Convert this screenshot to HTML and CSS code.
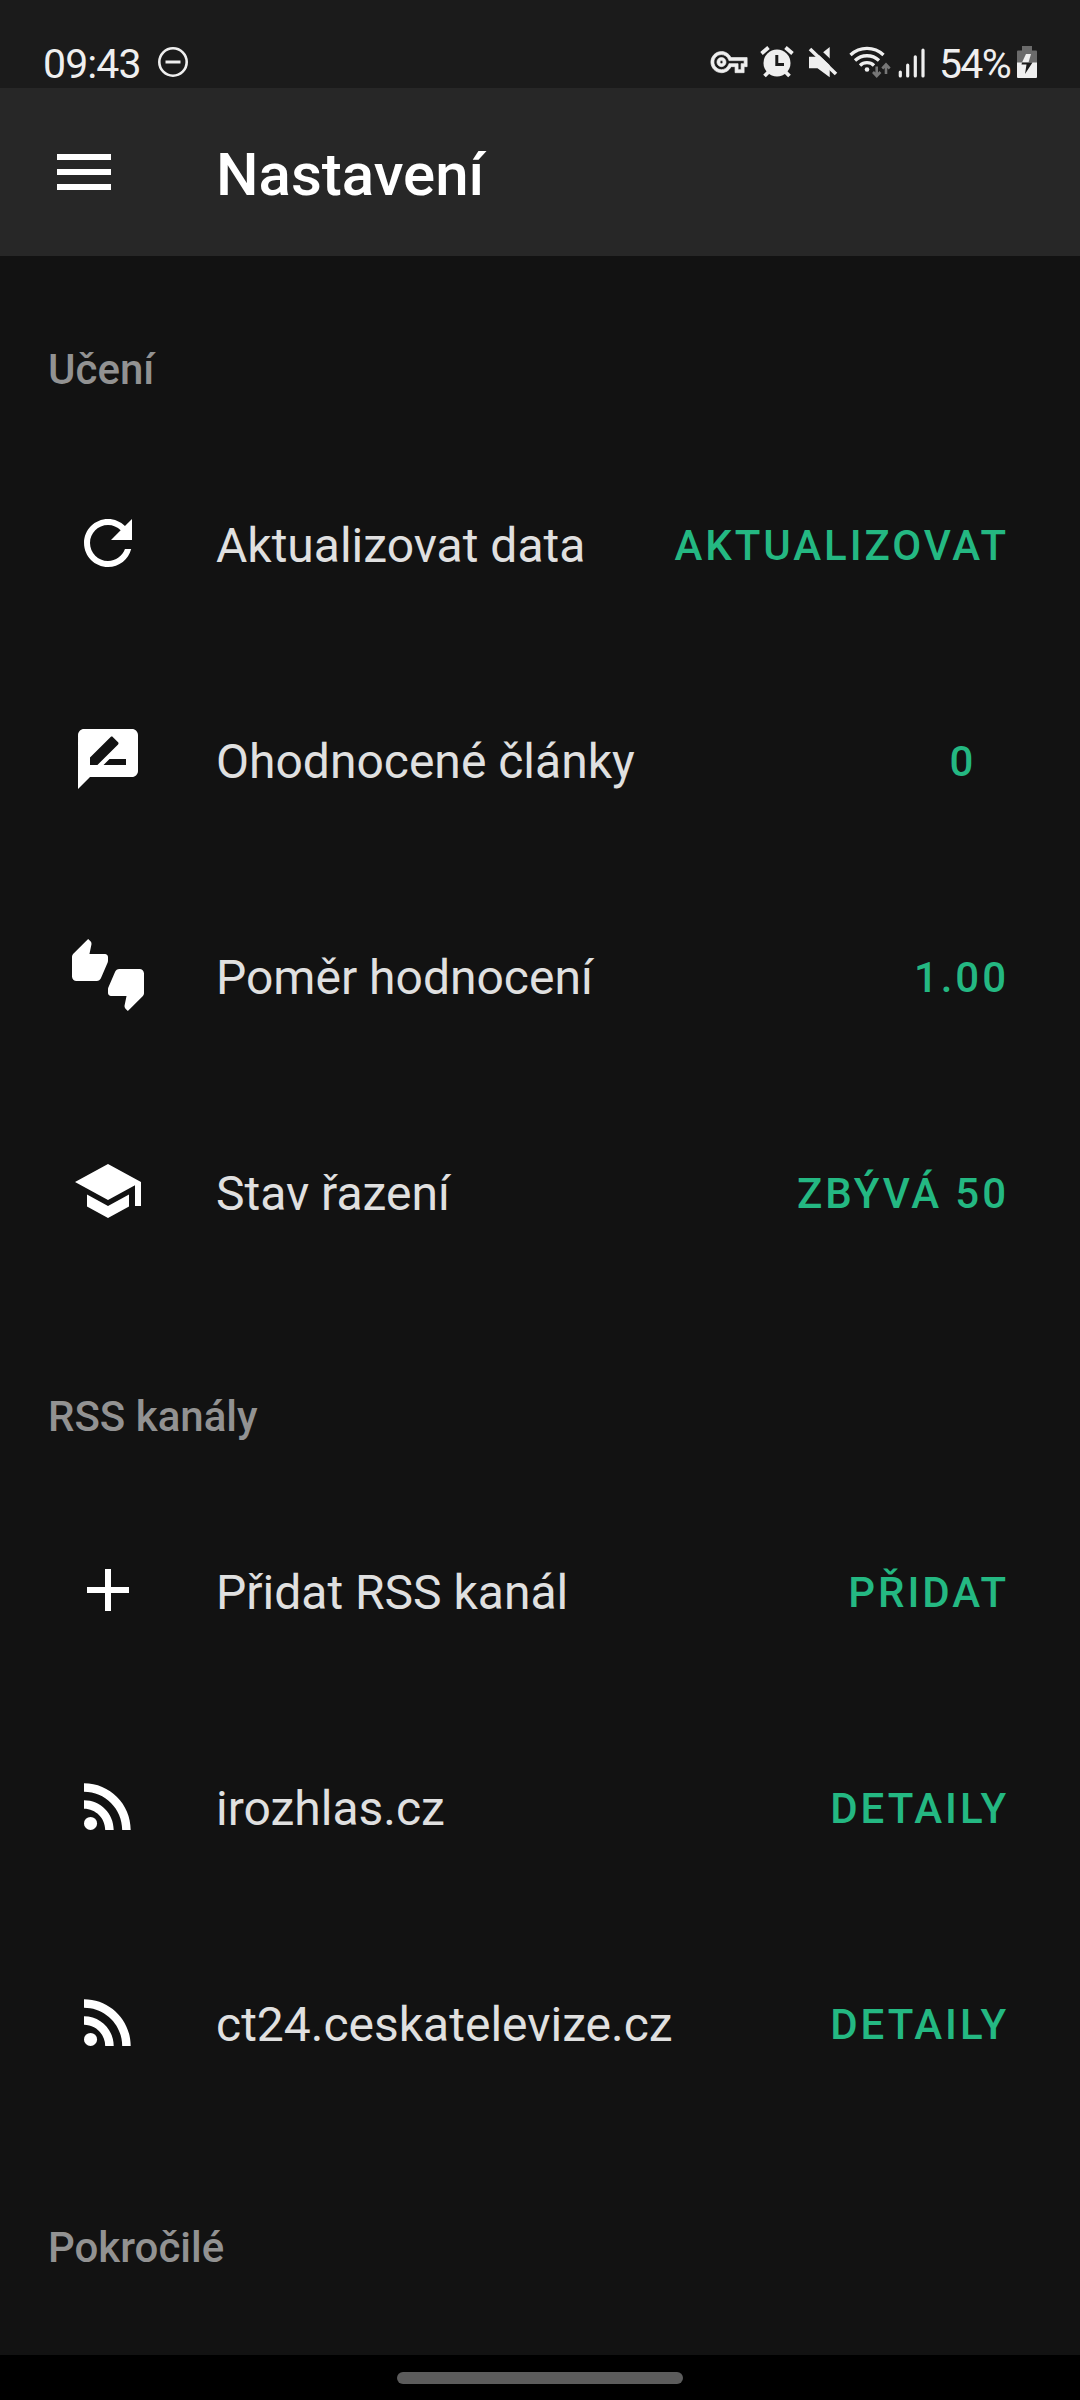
FILE: index.html
```html
<!DOCTYPE html>
<html lang="cs">
<head>
<meta charset="utf-8">
<title>Nastavení</title>
<link rel="stylesheet" href="styles.css">
</head>
<body>
<div class="screen">
  <div class="status">
    <span class="status-text clock">09:43</span>
    <svg class="dnd" width="32" height="32" viewBox="0 0 32 32" fill="none" stroke="#efefef"><circle cx="16" cy="16" r="13.7" stroke-width="2.6"/><path d="M8.5 16h15" stroke-width="3"/></svg>
    <svg class="tray" width="226" height="40" viewBox="704 40 226 40" fill="#efefef">
      <!-- VPN key -->
      <path stroke="#efefef" stroke-width=".45" transform="translate(710.9 44) scale(1.51)" d="M22 19h-6v-4h-2.680c-1.140 2.420-3.600 4-6.320 4-3.860 0-7-3.140-7-7s3.140-7 7-7c2.720 0 5.170 1.580 6.320 4H24v6h-2v4zm-4-2h2v-4h2v-2H11.940l-.23-.67C11.010 8.340 9.110 7 7 7c-2.760 0-5 2.240-5 5s2.240 5 5 5c2.110 0 4.010-1.340 4.710-3.330l.23-.67H18v4zM7 15c-1.650 0-3-1.350-3-3s1.350-3 3-3 3 1.350 3 3-1.350 3-3 3zm0-4c-.55 0-1 .45-1 1s.45 1 1 1 1-.45 1-1-.45-1-1-1z"/>
      <!-- alarm -->
      <circle cx="777" cy="63" r="13.5"/>
      <path d="M761.500 53.500l7-6M785.500 47.500l7 6M769 71.500l-4.500 4.500M785 71.500l4.500 4.500" fill="none" stroke="#efefef" stroke-width="3.800"/>
      <path d="M776.800 55v9.500h7.200" fill="none" stroke="#1b1b1b" stroke-width="3"/>
      <!-- muted speaker -->
      <path d="M809 56.700h8.500l12.200-9.700v30.300l-12.200-9H809z"/>
      <path d="M812.500 45.500l27 25.500" stroke="#1b1b1b" stroke-width="5"/>
      <path d="M810 49l26 25" stroke="#efefef" stroke-width="3.600"/>
      <!-- wifi with traffic arrows -->
      <g fill="none" stroke="#efefef" stroke-width="3.300">
        <path d="M850.500 55a24 24 0 0 1 33 0M855 60.500a17.500 17.500 0 0 1 24 0M860 65.500a10 10 0 0 1 14 0"/>
      </g>
      <circle cx="867" cy="69.500" r="2.300"/>
      <path d="M876.700 66.500v9M873 72l3.700 4 3.700-4M886 74v-9M882.300 68.500l3.700-4 3.700 4" fill="none" stroke="#777" stroke-width="2.600"/>
      <!-- signal -->
      <path d="M900.300 72v4M907.700 65.200v10.800M915.300 56.800v19.200M923 50.200v25.800" stroke="#efefef" stroke-width="3.200" stroke-linecap="round"/>
    </svg>
    <span class="status-text battery-level">54%</span>
    <svg class="battery" width="20" height="32" viewBox="0 0 20 32">
      <path fill="#6b6b6b" d="M5 0h10v4.500h4a1 1 0 0 1 1 1V17H0V5.500a1 1 0 0 1 1-1h4z"/>
      <path fill="#efefef" d="M0 16.500h20V31a1 1 0 0 1-1 1H1a1 1 0 0 1-1-1z"/>
      <path fill="#efefef" d="M9 8h5l-2.500 8.500H5z"/>
      <path fill="#1b1b1b" d="M5 16.500h10.500L8 28l1.500-9.500H4.500z"/>
    </svg>
  </div>
  <header class="toolbar">
    <svg class="icon" viewBox="0 0 24 24"><path d="M3 18h18v-2H3v2zm0-5h18v-2H3v2zm0-7v2h18V6H3z"/></svg>
    <h1 class="title">Nastavení</h1>
  </header>
  <main class="list">
    <h2 class="section">Učení</h2>
    <div class="row">
      <svg class="icon" viewBox="0 0 24 24"><path d="M17.650 6.350C16.200 4.900 14.210 4 12 4c-4.420 0-7.990 3.580-7.990 8s3.570 8 7.990 8c3.730 0 6.840-2.550 7.730-6h-2.080c-.82 2.330-3.040 4-5.650 4-3.310 0-6-2.690-6-6s2.690-6 6-6c1.660 0 3.140.69 4.220 1.780L13 11h7V4l-2.350 2.350z"/></svg>
      <span class="label">Aktualizovat data</span><span class="action">AKTUALIZOVAT</span>
    </div>
    <div class="row">
      <svg class="icon" viewBox="0 0 24 24"><path d="M20 2H4c-1.100 0-1.990.9-1.990 2L2 22l4-4h14c1.100 0 2-.9 2-2V4c0-1.100-.9-2-2-2zM6 14v-2.470l6.880-6.880c.2-.2.510-.2.710 0l1.770 1.770c.2.2.2.510 0 .710L8.470 14H6zm12 0h-7.500l2-2H18v2z"/></svg>
      <span class="label">Ohodnocené články</span><span class="action">0</span>
    </div>
    <div class="row">
      <svg class="icon" viewBox="0 0 24 24"><path d="M12 6c0-.55-.45-1-1-1H5.820l.66-3.180.02-.23c0-.31-.13-.59-.33-.8L5.380 0 .44 4.940C.17 5.210 0 5.590 0 6v6.500c0 .83.67 1.500 1.500 1.500h6.750c.62 0 1.150-.38 1.380-.91l2.260-5.290c.07-.17.110-.36.110-.55V6zm10.500 4h-6.750c-.62 0-1.150.38-1.380.91l-2.260 5.290c-.07.17-.11.36-.11.55V18c0 .55.45 1 1 1h5.180l-.66 3.180-.02.24c0 .31.13.59.33.8l.79.78 4.940-4.940c.27-.27.44-.65.44-1.060v-6.500c0-.83-.67-1.500-1.500-1.500z"/></svg>
      <span class="label">Poměr hodnocení</span><span class="action">1.00</span>
    </div>
    <div class="row">
      <svg class="icon" viewBox="0 0 24 24"><path d="M5 13.180v4L12 21l7-3.820v-4L12 17l-7-3.820zM12 3L1 9l11 6 9-4.910V17h2V9L12 3z"/></svg>
      <span class="label">Stav řazení</span><span class="action">ZBÝVÁ 50</span>
    </div>
    <h2 class="section">RSS kanály</h2>
    <div class="row">
      <svg class="icon" viewBox="0 0 24 24"><path d="M19 13h-6v6h-2v-6H5v-2h6V5h2v6h6v2z"/></svg>
      <span class="label">Přidat RSS kanál</span><span class="action">PŘIDAT</span>
    </div>
    <div class="row">
      <svg class="icon" viewBox="0 0 24 24"><circle cx="6.180" cy="17.820" r="2.180"/><path d="M4 4.440v2.830c7.030 0 12.730 5.700 12.730 12.730h2.830c0-8.590-6.970-15.560-15.560-15.560zm0 5.660v2.830c3.900 0 7.070 3.170 7.070 7.070h2.830c0-5.470-4.430-9.900-9.900-9.900z"/></svg>
      <span class="label">irozhlas.cz</span><span class="action">DETAILY</span>
    </div>
    <div class="row">
      <svg class="icon" viewBox="0 0 24 24"><circle cx="6.180" cy="17.820" r="2.180"/><path d="M4 4.440v2.830c7.030 0 12.730 5.700 12.730 12.730h2.830c0-8.590-6.970-15.560-15.560-15.560zm0 5.660v2.830c3.900 0 7.070 3.170 7.070 7.070h2.830c0-5.470-4.430-9.900-9.900-9.900z"/></svg>
      <span class="label">ct24.ceskatelevize.cz</span><span class="action">DETAILY</span>
    </div>
    <h2 class="section">Pokročilé</h2>
  </main>
  <div class="navbar"><div class="pill"></div></div>
</div>
</body>
</html>
```
FILE: styles.css
```css
* { box-sizing: border-box; }
body { margin: 0; background: #121212; font-family: Roboto, sans-serif; }
.screen { width: 1080px; height: 2400px; display: flex; flex-direction: column; overflow: hidden; }
.status { height: 88px; flex: none; background: #1b1b1b; display: flex; padding: 0 43px; }
.status svg { flex: none; }
.status-text { font-size: 41px; line-height: 48px; margin-top: 40px; color: #efefef; white-space: nowrap; }
.clock { width: 98px; letter-spacing: -.9px; }
.dnd { margin: 46px 0 0 16px; }
.tray { margin: 40px 0 0 auto; }
.battery-level { width: 70px; margin-left: 9px; letter-spacing: -1.700px; text-align: right; }
.battery { margin: 46px 0 0 8px; }
.toolbar { height: 168px; flex: none; background: #272727; display: flex; align-items: center; padding-left: 48px; }
.icon { width: 72px; height: 72px; fill: #fff; flex: none; }
.title { margin: 6px 0 0 96px; font-size: 60px; line-height: 70px; font-weight: 500; color: #fff; }
.list { flex: 1; min-height: 0; overflow: hidden; }
.section { margin: 0; height: 183px; padding: 89px 48px 0; font-size: 42px; line-height: 49px; font-weight: 500; color: #929292; }
.row { height: 216px; display: flex; align-items: center; padding: 0 48px 8px 72px; }
.label { margin-left: 72px; flex: 1; font-size: 48px; line-height: 56px; padding-top: 6px; color: #e0e0e0; }
.action { min-width: 139px; padding: 4px 23px 0 24px; text-align: center; font-size: 42px; line-height: 49px; font-weight: 500; letter-spacing: 2.950px; color: #24b882; }
.navbar { height: 45px; flex: none; background: #000; display: flex; align-items: center; justify-content: center; }
.pill { width: 286px; height: 12px; border-radius: 6px; background: #5c5c5c; }
```
